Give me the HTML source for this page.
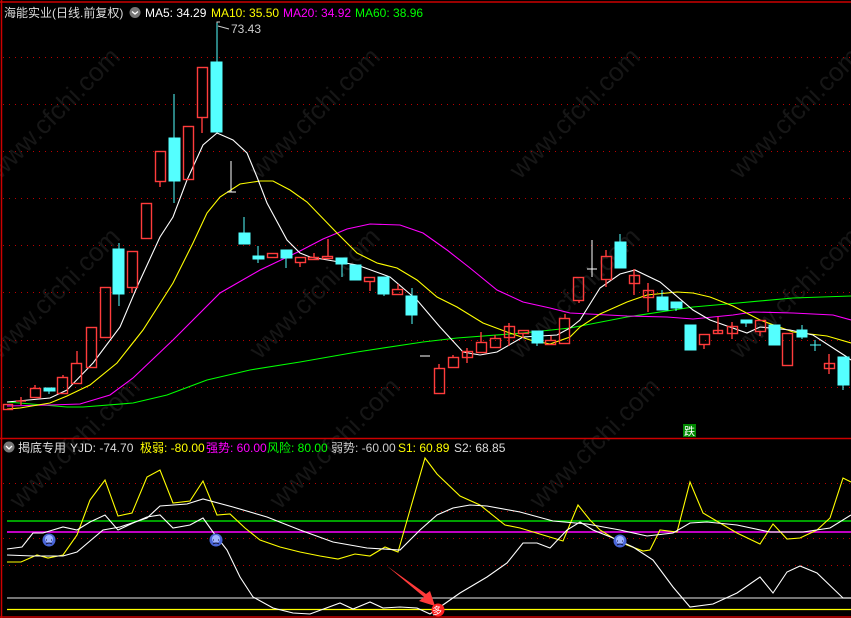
<!DOCTYPE html>
<html><head><meta charset="utf-8"><style>
html,body{margin:0;padding:0;background:#000;width:851px;height:618px;overflow:hidden}
svg{display:block}
text{font-family:"Liberation Sans","Noto Sans CJK SC",sans-serif;font-size:12px}
</style></head><body>
<svg width="851" height="618" viewBox="0 0 851 618" xmlns="http://www.w3.org/2000/svg">
<rect width="851" height="618" fill="#000"/>
<g>
<text x="0" y="180" transform="rotate(-45 0 180)" style="font-size:26px" fill="#161616">www.cfchi.com</text>
<text x="260" y="180" transform="rotate(-45 260 180)" style="font-size:26px" fill="#161616">www.cfchi.com</text>
<text x="520" y="180" transform="rotate(-45 520 180)" style="font-size:26px" fill="#161616">www.cfchi.com</text>
<text x="740" y="180" transform="rotate(-45 740 180)" style="font-size:26px" fill="#161616">www.cfchi.com</text>
<text x="0" y="360" transform="rotate(-45 0 360)" style="font-size:26px" fill="#161616">www.cfchi.com</text>
<text x="260" y="360" transform="rotate(-45 260 360)" style="font-size:26px" fill="#161616">www.cfchi.com</text>
<text x="520" y="360" transform="rotate(-45 520 360)" style="font-size:26px" fill="#161616">www.cfchi.com</text>
<text x="740" y="360" transform="rotate(-45 740 360)" style="font-size:26px" fill="#161616">www.cfchi.com</text>
<text x="20" y="510" transform="rotate(-45 20 510)" style="font-size:26px" fill="#161616">www.cfchi.com</text>
<text x="280" y="510" transform="rotate(-45 280 510)" style="font-size:26px" fill="#161616">www.cfchi.com</text>
<text x="540" y="510" transform="rotate(-45 540 510)" style="font-size:26px" fill="#161616">www.cfchi.com</text>
</g>
<line x1="0" y1="2" x2="851" y2="2" stroke="#c00" stroke-width="1.5"/>
<line x1="1.5" y1="0" x2="1.5" y2="618" stroke="#c00" stroke-width="1.5"/>
<line x1="0" y1="438.5" x2="851" y2="438.5" stroke="#c00" stroke-width="1.5"/>
<line x1="0" y1="617" x2="851" y2="617" stroke="#c00" stroke-width="1.5"/>
<g stroke="#b00" stroke-dasharray="1,5" stroke-width="1">
<line x1="3" y1="57.5" x2="851" y2="57.5"/><line x1="3" y1="104.5" x2="851" y2="104.5"/>
<line x1="3" y1="151.5" x2="851" y2="151.5"/><line x1="3" y1="198.5" x2="851" y2="198.5"/>
<line x1="3" y1="245.5" x2="851" y2="245.5"/><line x1="3" y1="292.5" x2="851" y2="292.5"/>
<line x1="3" y1="340.5" x2="851" y2="340.5"/><line x1="3" y1="387.5" x2="851" y2="387.5"/>
<line x1="3" y1="483.5" x2="851" y2="483.5"/><line x1="3" y1="511.5" x2="851" y2="511.5"/>
<line x1="3" y1="538.5" x2="851" y2="538.5"/><line x1="3" y1="565.5" x2="851" y2="565.5"/>
</g>
<text x="4" y="17" fill="#ddd">海能实业(日线.前复权)</text>
<circle cx="135" cy="12.5" r="5.5" fill="#777"/><path d="M132 11.5 L135 14 L138 11.5" stroke="#fff" fill="none" stroke-width="1.3"/>
<text x="145" y="17" fill="#fff">MA5: 34.29</text>
<text x="211" y="17" fill="#ff0">MA10: 35.50</text>
<text x="283" y="17" fill="#f0f">MA20: 34.92</text>
<text x="355" y="17" fill="#0f0">MA60: 38.96</text>
<text x="231" y="33" fill="#ccc">73.43</text>
<path d="M217 25 L217 22 L220 22 M218 26 L229 29" stroke="#ccc" fill="none"/>
<g fill="none" stroke-width="1.1">
<polyline stroke="#0f0" points="7,402 67,407 83,407 133,403 167,395 207,380 250,370 300,362 357,352 423,342 457,338 523,333 570,328 627,317 693,307 727,304 793,298 851,296"/>
<polyline stroke="#f0f" points="7,406 50,405 80,404 110,395 133,378 173,340 220,293 260,270 300,251 323,239 347,229 370,224 400,225 423,233 447,250 470,268 497,290 523,302 550,308 570,313 627,316 667,317 693,319 733,315 753,312 793,313 833,315 851,320"/>
<polyline stroke="#ff0" points="7,409 20,408 50,403 67,396 90,385 117,363 143,330 173,283 193,243 207,213 220,197 240,184 260,181 273,181 290,190 307,202 337,233 357,253 377,263 397,268 417,280 437,297 457,307 483,323 507,332 530,340 550,344 570,337 580,327 600,314 627,302 647,295 677,292 693,293 710,297 733,306 760,320 793,332 827,336 851,343"/>
<polyline stroke="#fff" points="7,402 50,398 67,390 93,363 120,327 137,287 160,237 173,217 187,180 203,145 217,133 233,140 247,153 257,177 267,203 287,240 300,253 310,257 357,265 390,277 417,300 440,327 463,352 480,355 497,352 523,337 557,335 570,328 580,320 600,288 620,274 635,270 660,282 693,310 710,320 747,333 760,327 790,330 813,335 847,357 851,360"/>
</g>
<g stroke="#ff3c3c" fill="none" stroke-width="1.4">
<rect x="3.5" y="404.5" width="9" height="5"/>
<line x1="21" y1="397" x2="21" y2="405"/><line x1="16" y1="401" x2="26" y2="401"/>
<rect x="30.5" y="388.5" width="10" height="9"/><line x1="35" y1="385" x2="35" y2="388"/>
<rect x="57.5" y="377.5" width="10" height="16"/><line x1="63" y1="375" x2="63" y2="377"/>
<rect x="71.5" y="363.5" width="10" height="20"/><line x1="77" y1="351" x2="77" y2="363"/>
<rect x="86.5" y="327.5" width="10" height="40"/>
<rect x="100.5" y="287.5" width="10" height="50"/>
<rect x="127.5" y="251.5" width="10" height="36"/><line x1="132" y1="288" x2="132" y2="293"/>
<rect x="141.5" y="203.5" width="10" height="35"/>
<rect x="155.5" y="151.5" width="10" height="30"/><line x1="160" y1="182" x2="160" y2="187"/>
<rect x="183.5" y="126.5" width="10" height="53"/>
<rect x="197.5" y="67.5" width="10" height="50"/><line x1="202" y1="118" x2="202" y2="133"/>
<rect x="267.5" y="253.5" width="10" height="4"/>
<rect x="295.5" y="257.5" width="10" height="5"/><line x1="300" y1="263" x2="300" y2="267"/>
<rect x="308.5" y="257.5" width="10" height="2"/><line x1="314" y1="253" x2="314" y2="257"/>
<rect x="322.5" y="256.5" width="10" height="2"/><line x1="328" y1="239" x2="328" y2="256"/>
<rect x="364.5" y="277.5" width="10" height="4"/><line x1="370" y1="282" x2="370" y2="291"/>
<rect x="392.5" y="289.5" width="10" height="5"/><line x1="398" y1="284" x2="398" y2="289"/>
<rect x="434.5" y="368.5" width="10" height="25"/><line x1="439" y1="364" x2="439" y2="368"/>
<rect x="448.5" y="357.5" width="10" height="10"/><line x1="453" y1="355" x2="453" y2="357"/>
<rect x="462.5" y="351.5" width="10" height="6"/><line x1="467" y1="348" x2="467" y2="363"/>
<rect x="476.5" y="342.5" width="10" height="10"/><line x1="481" y1="332" x2="481" y2="342"/>
<rect x="490.5" y="338.5" width="10" height="9"/><line x1="495" y1="335" x2="495" y2="338"/>
<rect x="504.5" y="326.5" width="10" height="11"/><line x1="509" y1="323" x2="509" y2="346"/>
<rect x="518.5" y="330.5" width="10" height="3"/><line x1="523" y1="334" x2="523" y2="338"/>
<rect x="545.5" y="340.5" width="10" height="4"/><line x1="551" y1="336" x2="551" y2="340"/>
<rect x="559.5" y="318.5" width="10" height="25"/><line x1="565" y1="314" x2="565" y2="318"/>
<rect x="573.5" y="277.5" width="10" height="23"/><line x1="579" y1="301" x2="579" y2="303"/>
<rect x="601.5" y="256.5" width="10" height="23"/><line x1="606" y1="250" x2="606" y2="256"/><line x1="606" y1="280" x2="606" y2="287"/>
<rect x="629.5" y="275.5" width="10" height="8"/><line x1="634" y1="269" x2="634" y2="295"/>
<rect x="643.5" y="290.5" width="10" height="7"/><line x1="648" y1="283" x2="648" y2="312"/>
<rect x="699.5" y="334.5" width="10" height="10"/><line x1="704" y1="345" x2="704" y2="349"/>
<rect x="713.5" y="330.5" width="9" height="3"/><line x1="718" y1="317" x2="718" y2="334"/>
<rect x="727.5" y="326.5" width="10" height="7"/><line x1="732" y1="322" x2="732" y2="339"/>
<rect x="755.5" y="320.5" width="10" height="11"/><line x1="760" y1="332" x2="760" y2="336"/>
<rect x="782.5" y="333.5" width="10" height="32"/>
<rect x="824.5" y="363.5" width="10" height="5"/><line x1="829" y1="354" x2="829" y2="374"/>
</g>
<g fill="#54ffff" stroke="#54ffff" stroke-width="1">
<rect x="44" y="388" width="11" height="3"/><line x1="49" y1="391" x2="49" y2="394"/>
<rect x="113" y="249" width="11" height="45"/><line x1="119" y1="243" x2="119" y2="306"/>
<rect x="169" y="138" width="11" height="43"/><line x1="174" y1="94" x2="174" y2="203"/>
<rect x="211" y="62" width="11" height="70"/><line x1="217" y1="23" x2="217" y2="132"/>
<rect x="239" y="233" width="11" height="11"/><line x1="244" y1="217" x2="244" y2="244"/>
<rect x="253" y="256" width="11" height="3"/><line x1="258" y1="246" x2="258" y2="263"/>
<rect x="281" y="250" width="11" height="8"/><line x1="286" y1="258" x2="286" y2="268"/>
<rect x="336" y="258" width="11" height="6"/><line x1="342" y1="264" x2="342" y2="277"/>
<rect x="350" y="265" width="11" height="15"/>
<rect x="378" y="277" width="11" height="17"/><line x1="384" y1="294" x2="384" y2="296"/>
<rect x="406" y="296" width="11" height="19"/><line x1="412" y1="288" x2="412" y2="324"/>
<rect x="532" y="331" width="11" height="12"/><line x1="537" y1="343" x2="537" y2="346"/>
<rect x="615" y="242" width="11" height="26"/><line x1="620" y1="234" x2="620" y2="242"/>
<rect x="657" y="297" width="11" height="13"/><line x1="662" y1="290" x2="662" y2="297"/>
<rect x="671" y="302" width="11" height="6"/><line x1="676" y1="308" x2="676" y2="311"/>
<rect x="685" y="325" width="11" height="25"/>
<rect x="741" y="320" width="11" height="3"/><line x1="746" y1="323" x2="746" y2="327"/>
<rect x="769" y="325" width="11" height="20"/>
<rect x="797" y="330" width="10" height="7"/><line x1="802" y1="325" x2="802" y2="339"/>
<line x1="815" y1="340" x2="815" y2="351"/><line x1="810" y1="345" x2="821" y2="345"/>
<rect x="838" y="357" width="11" height="28"/><line x1="843" y1="385" x2="843" y2="390"/>
</g>
<g stroke="#fff" stroke-width="1">
<line x1="231" y1="161" x2="231" y2="192"/><line x1="227" y1="192" x2="236" y2="192"/>
<line x1="420" y1="356" x2="430" y2="356"/>
<line x1="592" y1="240" x2="592" y2="277"/><line x1="587" y1="269" x2="597" y2="269"/>
</g>
<rect x="683" y="424" width="13" height="13" fill="#080"/>
<text x="684" y="435" fill="#fff" style="font-size:11px">跌</text>
<circle cx="9" cy="447" r="5.5" fill="#777"/><path d="M6 446 L9 449 L12 446" stroke="#fff" fill="none" stroke-width="1.3"/>
<text x="18" y="452" fill="#ddd">揭底专用</text>
<text x="70" y="452" fill="#ddd">YJD: -74.70</text>
<text x="140" y="452" fill="#ff0">极弱: -80.00</text>
<text x="206" y="452" fill="#f0f">强势: 60.00</text>
<text x="267" y="452" fill="#0f0">风险: 80.00</text>
<text x="331" y="452" fill="#ccc">弱势: -60.00</text>
<text x="398" y="452" fill="#ff0">S1: 60.89</text>
<text x="454" y="452" fill="#ddd">S2: 68.85</text>
<line x1="7" y1="521" x2="851" y2="521" stroke="#0f0" stroke-width="1.2"/>
<line x1="7" y1="532" x2="851" y2="532" stroke="#f0f" stroke-width="1.5"/>
<line x1="7" y1="598" x2="851" y2="598" stroke="#bbb" stroke-width="1.2"/>
<line x1="7" y1="609.5" x2="851" y2="609.5" stroke="#ff0" stroke-width="1.2"/>
<g fill="none" stroke-width="1.1">
<polyline stroke="#ff0" points="7,562 21,562 37,555 48,558 63,555 77,535 90,500 105,480 118,516 132,513 147,477 160,470 173,503 190,501 203,481 217,515 230,514 245,528 260,540 280,547 300,552 320,556 338,559 355,554 370,556 385,547 398,552 410,510 425,458 437,474 460,496 480,505 505,525 520,528 553,538 563,541 578,505 590,520 600,530 613,538 627,545 643,551 650,550 660,530 677,532 690,482 703,513 720,523 737,533 760,544 773,524 787,539 800,538 817,530 830,518 843,478 851,482"/>
<polyline stroke="#fff" points="7,555 33,556 63,556 77,552 103,530 120,527 147,518 160,506 187,504 203,499 233,507 267,517 300,530 333,542 367,548 400,550 420,530 437,515 453,508 470,505 487,506 520,512 553,521 587,524 620,530 647,536 673,533 690,523 707,522 737,525 770,532 803,532 830,528 851,515"/>
<polyline stroke="#fff" points="7,549 22,547 33,533 43,533 63,527 77,530 90,522 105,515 118,530 133,523 147,517 160,515 173,528 190,525 203,518 213,532 227,550 240,577 253,597 273,608 293,613 310,614 340,603 353,609 370,602 383,608 400,607 417,608 430,614 440,607 460,593 487,577 507,563 523,543 537,543 550,548 567,530 580,522 593,530 613,538 633,547 653,560 673,587 690,607 713,604 737,593 760,577 773,593 787,572 800,566 817,573 843,598 851,598"/>
</g>
<g>
<circle cx="49" cy="540" r="6.5" fill="#4a66d8"/><circle cx="49" cy="539" r="4" fill="#9fb4ff"/>
<circle cx="216" cy="540" r="6.5" fill="#4a66d8"/><circle cx="216" cy="539" r="4" fill="#9fb4ff"/>
<circle cx="620" cy="541" r="6.5" fill="#4a66d8"/><circle cx="620" cy="540" r="4" fill="#9fb4ff"/>
<g stroke="#113" stroke-width="1" fill="none">
<path d="M46 540h1M51 540h1M46 544q3-2 6 0"/>
<path d="M213 540h1M218 540h1M213 544q3-2 6 0"/>
<path d="M617 541h1M622 541h1M617 545q3-2 6 0"/>
</g>
</g>
<path d="M387 566 L424 597 L419 601 L435 606 L430 591 L426 594 Z" fill="#ff3a3a"/>
<circle cx="438" cy="610" r="6.5" fill="#f22"/>
<text x="432" y="614.5" fill="#fff" style="font-size:10px">多</text>
</svg>
</body></html>
